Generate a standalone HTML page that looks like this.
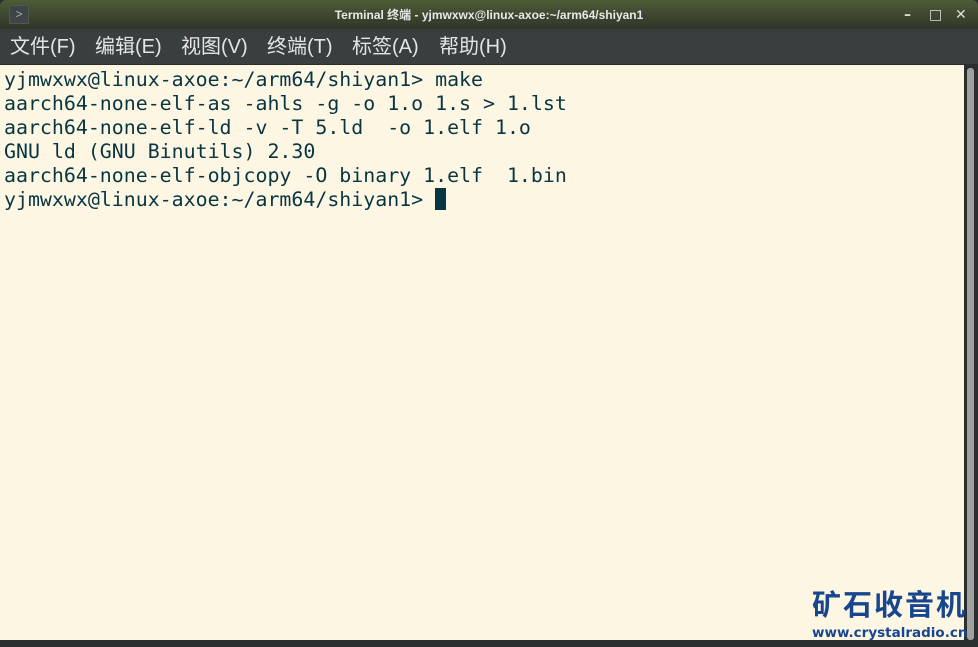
<!DOCTYPE html>
<html><head><meta charset="utf-8"><style>
html,body{margin:0;padding:0;width:978px;height:647px;overflow:hidden;background:#2a2e2e}
#title{position:absolute;left:0;top:0;width:978px;height:29px;background:linear-gradient(#4e5c37,#2f3529);border-radius:6px 6px 0 0;color:#e8e8e8;font:bold 12px "Liberation Sans","Noto Sans CJK SC",sans-serif;text-align:center;line-height:30px}
#ico{position:absolute;left:9px;top:5px;width:18px;height:17px;background:#3e4545;border:1px solid #555;color:#aaa;font:12px "Liberation Sans",sans-serif;line-height:16px;text-align:center}
.wb{position:absolute;top:0;color:#ddd;font:bold 14px "DejaVu Sans",sans-serif;line-height:30px}
#menu{position:absolute;left:0;top:29px;width:978px;height:35px;background:#393f3f;color:#e4e4e4;font:20px "Liberation Sans","Noto Sans CJK SC",sans-serif;line-height:36px}
#menu span{position:absolute;top:0}
#term{position:absolute;left:0;top:65px;width:964px;height:575px;background:#fdf6e3}
pre{margin:0;position:absolute;left:4px;top:3px;font:19.9px "DejaVu Sans Mono","Liberation Mono",monospace;line-height:24px;color:#073642}
.cur{display:inline-block;width:11px;height:22px;background:#073642;vertical-align:-4px}
#sb{position:absolute;left:967px;top:68px;width:7px;height:572px;background:#9fa09f;border-radius:3px}
#wm1{position:absolute;left:812px;top:520px;white-space:nowrap;font:bold 29px "WenQuanYi Zen Hei","Noto Sans CJK SC",sans-serif;color:#17468f;letter-spacing:2px;line-height:36px}
#wm2{position:absolute;left:812px;top:559px;white-space:nowrap;font:bold 13.5px "DejaVu Sans",sans-serif;color:#17468f;line-height:18px}
</style></head><body>
<div id="title"><div id="ico">&gt;</div>Terminal 终端 - yjmwxwx@linux-axoe:~/arm64/shiyan1
<span class="wb" style="left:904px">–</span><span class="wb" style="left:929px">□</span><span class="wb" style="left:955px">✕</span></div>
<div id="menu"><span style="left:10px">文件(F)</span><span style="left:95px">编辑(E)</span><span style="left:181px">视图(V)</span><span style="left:267px">终端(T)</span><span style="left:352px">标签(A)</span><span style="left:439px">帮助(H)</span></div>
<div id="term"><pre>yjmwxwx@linux-axoe:~/arm64/shiyan1&gt; make
aarch64-none-elf-as -ahls -g -o 1.o 1.s &gt; 1.lst
aarch64-none-elf-ld -v -T 5.ld  -o 1.elf 1.o
GNU ld (GNU Binutils) 2.30
aarch64-none-elf-objcopy -O binary 1.elf  1.bin
yjmwxwx@linux-axoe:~/arm64/shiyan1&gt; <span class="cur"></span></pre>
<div id="wm1">矿石收音机</div><div id="wm2">www.crystalradio.cn</div>
</div>
<div id="sb"></div>
</body></html>
